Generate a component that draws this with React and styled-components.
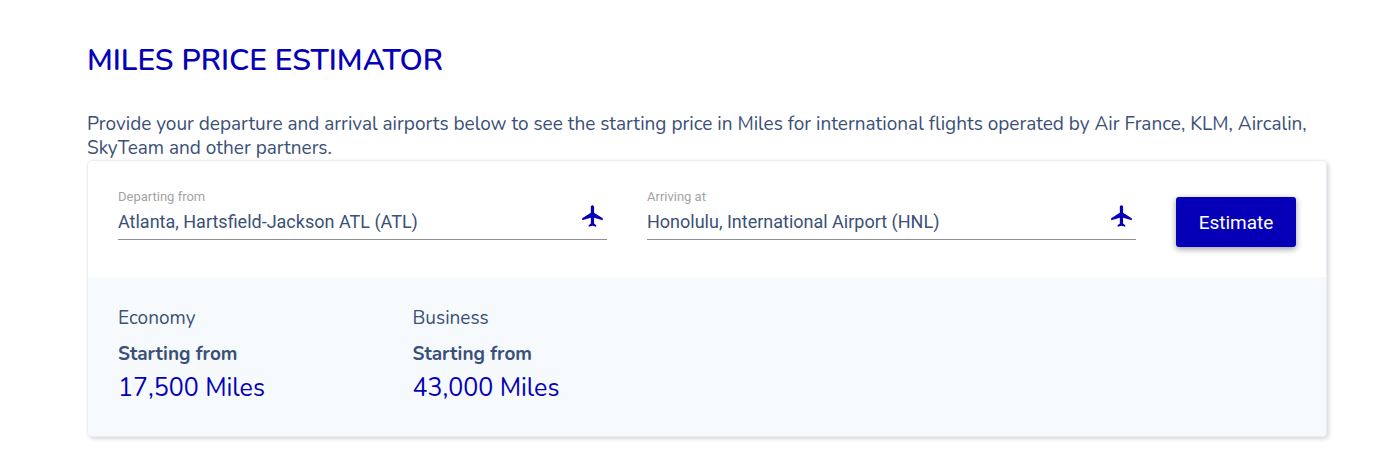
import React, { useState } from 'react';
import styled, { createGlobalStyle } from 'styled-components';
import { MdFlight } from 'react-icons/md';

const GlobalStyle = createGlobalStyle`
  :root {
    --brand: #0500b8;
    --text: #3b5078;
    --heading-font: Nunito, Lato, sans-serif;
    --control-font: Roboto, sans-serif;
  }
  * {
    box-sizing: border-box;
  }
  body {
    margin: 0;
    background: #fff;
    color: var(--text);
    font-family: var(--heading-font);
  }
`;

const Section = styled.section`
  padding: 41px 57px 16px 87px;
`;

const Title = styled.h2`
  margin: 0 0 31px;
  font-size: 30px;
  font-weight: 600;
  line-height: 40px;
  text-transform: uppercase;
  color: var(--brand);
`;

const Intro = styled.p`
  margin: 0;
  font-size: 19px;
  line-height: 24px;
`;

const Card = styled.div`
  border: 1px solid #ebebfa;
  border-radius: 5px;
  overflow: hidden;
  box-shadow: 2px 2px 4px rgba(0, 0, 0, 0.16);
`;

const SearchForm = styled.form`
  display: flex;
  flex-wrap: wrap;
  align-items: flex-start;
  gap: 40px;
  padding: 30px;
`;

// Field with a floating label on top and an underline below
const Field = styled.div`
  flex: 1 1 240px;
  display: grid;
  grid-template-columns: 1fr 28px;
  align-items: center;
  border-bottom: 1px solid #8e8e8e;
`;

const FieldText = styled.div`
  display: flex;
  flex-direction: column;
`;

const FieldLabel = styled.label`
  font-family: var(--control-font);
  font-size: 13px;
  line-height: 12px;
  color: #a3a3a3;
`;

const FieldInput = styled.input`
  width: 100%;
  height: 36px;
  padding: 0;
  border: 0;
  outline: 0;
  background: transparent;
  font-family: var(--control-font);
  font-size: 18px;
  color: var(--text);
`;

const FieldIcon = styled.span`
  display: flex;
  justify-content: center;
  padding-top: 2px;
  font-size: 26px;
  color: var(--brand);
`;

const EstimateButton = styled.button`
  width: 120px;
  height: 50px;
  margin-top: 6px;
  border: 0;
  border-radius: 3px;
  background: var(--brand);
  color: #fff;
  font-family: var(--control-font);
  font-size: 19px;
  cursor: pointer;
  box-shadow: 0 2px 6px rgba(0, 0, 0, 0.4);
`;

const Results = styled.div`
  display: grid;
  grid-template-columns: repeat(4, 1fr);
  padding: 29px 30px 30px;
  background: #f6fafd;
`;

const Cabin = styled.h3`
  margin: 0 0 12px;
  font-size: 19px;
  font-weight: 400;
  line-height: 24px;
`;

const StartingFrom = styled.div`
  font-size: 19px;
  font-weight: 700;
  line-height: 24px;
`;

const Price = styled.div`
  margin-top: 4px;
  font-size: 25px;
  line-height: 36px;
  color: var(--brand);
`;

const prices = [
  { cabin: 'Economy', miles: 17500 },
  { cabin: 'Business', miles: 43000 },
];

const AirportField = ({ id, label, value, onChange }) => (
  <Field>
    <FieldText>
      <FieldLabel htmlFor={id}>{label}</FieldLabel>
      <FieldInput id={id} type="text" value={value} onChange={(e) => onChange(e.target.value)} />
    </FieldText>
    <FieldIcon>
      <MdFlight />
    </FieldIcon>
  </Field>
);

const App = () => {
  const [from, setFrom] = useState('Atlanta, Hartsfield-Jackson ATL (ATL)');
  const [to, setTo] = useState('Honolulu, International Airport (HNL)');

  return (
    <Section>
      <GlobalStyle />
      <Title>Miles price estimator</Title>
      <Intro>
        Provide your departure and arrival airports below to see the starting price in Miles for
        international flights operated by Air France, KLM, Aircalin, SkyTeam and other partners.
      </Intro>
      <Card>
        <SearchForm onSubmit={(e) => e.preventDefault()}>
          <AirportField id="from" label="Departing from" value={from} onChange={setFrom} />
          <AirportField id="to" label="Arriving at" value={to} onChange={setTo} />
          <EstimateButton type="submit">Estimate</EstimateButton>
        </SearchForm>
        <Results>
          {prices.map(({ cabin, miles }) => (
            <div key={cabin}>
              <Cabin>{cabin}</Cabin>
              <StartingFrom>Starting from</StartingFrom>
              <Price>{miles.toLocaleString('en-US')} Miles</Price>
            </div>
          ))}
        </Results>
      </Card>
    </Section>
  );
};

export default App;
